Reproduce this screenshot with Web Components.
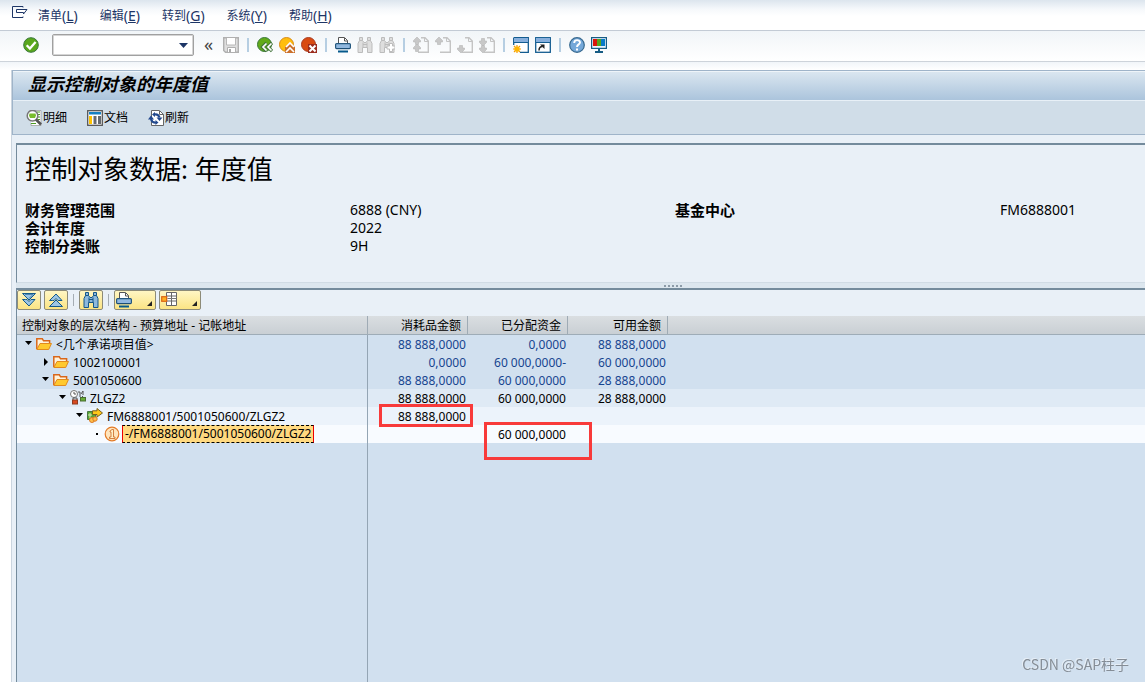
<!DOCTYPE html>
<html lang="zh-CN">
<head>
<meta charset="utf-8">
<meta name="viewport" content="width=device-width">
<title>显示控制对象的年度值</title>
<style>
html{height:100%}
body{margin:0;min-height:100%;display:flex;flex-direction:column;background:#fff;overflow-x:hidden;
font:12px/18px "Noto Sans","Noto Sans CJK SC",sans-serif;color:#000}
</style>
</head>
<body>
<sap-menu-bar></sap-menu-bar>
<sap-toolbar></sap-toolbar>
<sap-screen>
  <sap-title-bar slot="title" text="显示控制对象的年度值">
    <sap-action icon="detail">明细</sap-action>
    <sap-action icon="document">文档</sap-action>
    <sap-action icon="refresh">刷新</sap-action>
  </sap-title-bar>
  <sap-summary heading="控制对象数据: 年度值"></sap-summary>
  <sap-splitter></sap-splitter>
  <sap-tree-table></sap-tree-table>
</sap-screen>
<sap-watermark>CSDN @SAP柱子</sap-watermark>

<script>
const binoc = (f,s) => `<path d="M2.500.500h3v3L7 5.500h2l1.500-2v-3h3v3l1.500 3v9h-4.500V10.500h-5v5H1v-9l1.500-3z" fill="${f}" stroke="${s}"/><path d="M2.500 3.500h3M10.500 3.500h3M6 5.500v5M10 5.500v5M6 7.500h4" stroke="${s}" fill="none"/>`;
const page = a => `<path d="M8 .700h4l3.300 3.300v11.300H5" fill="none" stroke="#c4c4c4" stroke-width="1.400"/><path d="M11.500 1v3.500h4" fill="none" stroke="#c4c4c4"/>${a}`;
const up = y => `<path d="M4 ${y}l3.500 3.500v1.500H5.500v2.500h-3V${y+5}H.500V${y+3.5}z" fill="#c8c8c8" stroke="#b5b5b5" stroke-width=".600"/>`;
const down = y => `<path d="M4 ${y}l3.500-3.500v-1.500H5.500v-2.500h-3V${y-5}H.500V${y-3.5}z" fill="#c8c8c8" stroke="#b5b5b5" stroke-width=".600"/>`;
const disc = (f,s,m) => `<circle cx="7.500" cy="7.500" r="7" fill="${f}" stroke="${s}"/>${m}`;
const ICONS = {
 system:`<path d="M11 2.500V1.500H.500v11h10.500v-1" fill="none" stroke="#1d3566"/><path d="M4.500 4.500H15L11.500 9V7.500h-7z" fill="#fff" stroke="#1d3566"/>`,
 check:`<circle cx="8" cy="8" r="7.300" fill="#5aa71d" stroke="#39783a"/><path d="M3.700 8.200l3.200 3.300 5.700-6.500" fill="none" stroke="#fff" stroke-width="2.300"/>`,
 save:`<path d="M.700.700h14.600v14.600H2.500L.700 13.500z" fill="#dedede" stroke="#b0b0b0" stroke-width="1.400"/><path d="M3.500 1v7h9V1" fill="#fff" stroke="#b8b8b8"/><path d="M4.500 15v-4.500h8V15" fill="#fff" stroke="#b0b0b0"/><path d="M6 12h2v3H6z" fill="#aaa"/>`,
 back:disc('#62aa19','#39783a','<path d="M9.500 6l-4 4 4 4M15 6l-4 4 4 4" fill="none" stroke="#42733a" stroke-width="3.200"/><path d="M9.500 6.500L6 10l3.500 3.500M14.500 6.500L11 10l3.500 3.500" fill="none" stroke="#fff" stroke-width="1.700"/>'),
 exit:disc('#ffbd0c','#d78b18','<path d="M6 10l5-5 5 5v6H6z" fill="#cb702b"/><path d="M7 10l4-4 4 4M7 15l4-4 4 4" fill="none" stroke="#fff" stroke-width="1.700"/>'),
 cancel:disc('#d94b12','#a93c21','<path d="M7 7h9v9H7z" fill="#9b2c1d"/><path d="M8.500 8.500l6 6M14.500 8.500l-6 6" stroke="#fff" stroke-width="2"/>'),
 print:`<path d="M3.500 8V.500h6l3 3V8" fill="#fff" stroke="#555"/><path d="M9.500 1v3h3" fill="none" stroke="#555"/><rect x=".600" y="6.600" width="14.800" height="5" rx="1" fill="#91b8df" stroke="#24577e" stroke-width="1.200"/><path d="M1 11.500h14" stroke="#1c4e75"/><path d="M3 14.500h10" stroke="#075a8c" stroke-width="2"/>`,
 find:binoc('#dedede','#bcbcbc'),
 findNext:binoc('#dedede','#bcbcbc')+'<path d="M10.500 6.500v2.500h-2.500v3h2.500v2.500h3V12H16V9h-2.500V6.500z" fill="#fff" stroke="#bcbcbc"/>',
 pageFirst:page(up(0)+up(7)),pageUp:page(up(0)),pageDown:page(down(16)),pageLast:page(down(9)+down(16)),
 session:`<path d="M.700.700h14.600v14.600H7M.700 8V.700" fill="#fff" stroke="#135c90" stroke-width="1.300"/><path d="M1 1h14v4H1z" fill="#87afdc"/><path d="M1 5.500h14" stroke="#135c90"/><path d="M4 8v8M0 12h8M1 9l6 6M7 9l-6 6" stroke="#f59c00" stroke-width="1.200"/><circle cx="4" cy="12" r="2.600" fill="#ffb600"/>`,
 shortcut:`<rect x=".700" y=".700" width="14.600" height="14.600" fill="#fff" stroke="#135c90" stroke-width="1.300"/><path d="M1 1h14v4H1z" fill="#87afdc"/><path d="M1 5.500h14" stroke="#135c90"/><path d="M4 13.500c0-3 1-4 3.500-4" fill="none" stroke="#222" stroke-width="1.500"/><path d="M5 7.500h4.500v4.500z" fill="#222"/>`,
 help:`<circle cx="8" cy="8" r="7.300" fill="#75a8d9" stroke="#37698f" stroke-width="1.200"/><path d="M5.200 6c0-4 5.800-3.500 5.800-.500C11 7.500 8 7.300 8 10" fill="none" stroke="#fff" stroke-width="1.900"/><path d="M7 11.500h2v2H7z" fill="#fff"/>`,
 monitor:`<rect x=".600" y=".600" width="14.800" height="10.800" fill="#e8f4ff" stroke="#165c84" stroke-width="1.200"/><path d="M2 2h4v7H2z" fill="#d9150b"/><path d="M6 2h4v7H6z" fill="#55a51c"/><path d="M10 2h4v7h-4z" fill="#087ac8"/><path d="M8 12v3M4 15h8" stroke="#165c84" stroke-width="2"/>`,
 detail:`<path d="M7 .500h8v15H5V13" fill="#fff" stroke="#888" stroke-width=".600"/><path d="M11 2h3M12 4.500h2M12 7h2M12 9.500h2M5 13.500h5" stroke="#4d9c22" stroke-width="1.200"/><circle cx="6.500" cy="5.700" r="5.300" fill="#fff" stroke="#777" stroke-width="1.500"/><path d="M3.500 3.500h6l.500 2-1 2.500H4L3 5.500z" fill="#79bd2c"/><path d="M10 9.500l5 5" stroke="#555" stroke-width="2.600"/>`,
 document:`<rect x=".700" y=".700" width="14.600" height="14.600" fill="#fff" stroke="#555" stroke-width="1.300"/><path d="M2 2h12v2.500H2z" fill="#1680c2"/><path d="M2 6h3v8H2z" fill="#ffc400"/><path d="M6.500 6h3v8h-3zM11 6h3v8h-3z" fill="#666b70"/>`,
 refresh:`<path d="M3.500.500h8L15.500 4.500v11h-12z" fill="#fff" stroke="#666"/><path d="M11.500 1v3.500h4" fill="none" stroke="#666"/><path d="M6.500 4.500A4.500 4.500 0 0 1 11.500 7.500M8 12.500A4.500 4.500 0 0 1 3 9" fill="none" stroke="#23498d" stroke-width="2.200"/><path d="M8.500 7.500h6l-3 3.500zM0 9.500h6L3 5.500zM7 2v5L4 4.500zM7.500 10v5l3-2.500z" fill="#23498d"/>`,
 expandAll:`<path d="M1.500 1.500h13L8 8z" fill="#9cc5e5" stroke="#135a8b"/><path d="M4.500 7.500h1.500l2 2 2-2h4L8 14 1.500 7.500z" fill="#9cc5e5" stroke="#135a8b"/><path d="M4 2.500h8L8 6.500" fill="none" stroke="#4f88b3"/>`,
 collapseAll:`<path d="M1.500 14.500h13L8 8z" fill="#9cc5e5" stroke="#135a8b"/><path d="M4.500 8.500h1.500l2-2 2 2h4L8 2 1.500 8.500z" fill="#9cc5e5" stroke="#135a8b"/>`,
 search:binoc('#8db9dd','#145789'),
 layout:`<path d="M5.500.500h10v13h-10zM10.500.500v13M5.500 4h10M5.500 9h10" fill="#fff" stroke="#666"/><rect x=".700" y="4.700" width="5" height="4.600" fill="#ffb01e" stroke="#db6413" stroke-width="1.200"/><path d="M6.500 6.500h9" stroke="#777"/>`,
 folder:`<path d="M.800 13V2.800h5.500l1.300 2h6V7" fill="#fff2da" stroke="#d9671a" stroke-width="1.500"/><path d="M.800 13.500L4 7.500h11.500L12.700 13.500z" fill="#ffc92e" stroke="#e18a1e"/>`,
 budget:`<circle cx="4" cy="4" r="3.500" fill="#fff" stroke="#777"/><path d="M4 2v2h2M8 2h2v5M11 4l2-3v4M12 6l3 3" fill="none" stroke="#555"/><path d="M3 10V8h4v2" fill="none" stroke="#555"/><rect x="2.500" y="10" width="5" height="4" fill="#d94a21" stroke="#8e3a20"/><rect x="10.500" y="7.500" width="5" height="3.500" fill="#65ad35" stroke="#4b6d32"/>`,
 fund:`<path d="M.500 3.500h8v8h-8z" fill="#57a634" stroke="#477443"/><path d="M1 7h4M3 5v5" stroke="#d7e9b7"/><circle cx="5" cy="12" r="2.500" fill="#ffc04a" stroke="#dc7923"/><circle cx="8" cy="11" r="2.200" fill="#ffc04a" stroke="#dc7923"/><path d="M5.500 2.800H10V.500L15.500 5 10 9V6.500H5.500z" fill="#ffc719" stroke="#79601d"/>`,
 info:`<circle cx="8" cy="8" r="6.800" fill="#ffe5bd" stroke="#e37b28" stroke-width="1.200"/><path d="M6 5l2-1.500h1.500V11H11v1.500H5.500V11H7V6H6z" fill="#fff1c8" stroke="#c96722" stroke-width=".800"/>`
};
const define = (name, render) => customElements.define(name, class extends HTMLElement {
  connectedCallback(){
    if(this.shadowRoot) return;
    this.attachShadow({mode:'open'}).innerHTML = render(this);
  }
});
const reset = 'button{font:inherit;color:inherit;border:0;background:none;padding:0;margin:0;display:flex;align-items:center}';

define('sap-icon', e => `<style>:host{display:block;width:16px;height:16px;flex:none}svg{display:block}</style>
<svg width="16" height="16" viewBox="0 0 16 16" aria-hidden="true">${ICONS[e.getAttribute('name')]}</svg>`);

define('sap-menu-bar', () => `<style>
:host{display:block;color:#1d3566;background:linear-gradient(#dce5ee,#f5f8fb 9px,#fff 16px);border-bottom:1px solid #c3cbd5}
nav{display:flex;align-items:center;gap:22px;height:30px;padding:0 12px}
${reset}button span{font-size:14px}button{line-height:20px;padding-top:2px;white-space:nowrap}
.sys{padding:0;margin-right:-12px}.sys sap-icon{margin-bottom:4px}
</style><nav aria-label="菜单"><button class="sys" aria-label="系统菜单"><sap-icon name="system"></sap-icon></button>
${[['清单','L'],['编辑','E'],['转到','G'],['系统','Y'],['帮助','H']].map(([t,k])=>`<button accesskey="${k}">${t}<span>(<u>${k}</u>)</span></button>`).join('')}</nav>`);

const tool = (n,l) => `<button aria-label="${l}" title="${l}"><sap-icon name="${n}"></sap-icon></button>`;
define('sap-toolbar', () => `<style>
:host{display:block;background:linear-gradient(#f1f5f8,#fff);border-bottom:1px solid #cdd3da}
div.bar{display:flex;align-items:center;gap:6px;height:28px;padding:0 23px 2px}
${reset}
.combo{display:flex;box-sizing:border-box;width:142px;height:22px;margin-left:7px;border:1px solid #a0a0a0;box-shadow:inset 0 0 0 1px #d5d5d5;border-radius:2px;background:#fff;padding:2px}
input{flex:1;min-width:0;border:0;outline:0;background:none;padding:0 4px;font:inherit}
.drop{width:16px;justify-content:center}
.sep{width:2px;height:14px;margin:0 2px;background:#b6cee2}
.less{width:17px;justify-content:center;font-size:18px;line-height:18px;color:#444;padding-bottom:2px}
</style><div class="bar" role="toolbar">${tool('check','回车')}
<div class="combo"><input aria-label="命令"><button class="drop" aria-label="打开"><svg width="9" height="5"><path d="M0 0h9L4.500 5z" fill="#1d3566"/></svg></button></div>
<button class="less">«</button>${tool('save','保存')}<i class="sep"></i>${tool('back','返回')}${tool('exit','退出')}${tool('cancel','取消')}<i class="sep"></i>
${tool('print','打印')}${tool('find','查找')}${tool('findNext','查找下一个')}<i class="sep"></i>${tool('pageFirst','首页')}${tool('pageUp','上一页')}${tool('pageDown','下一页')}${tool('pageLast','末页')}<i class="sep"></i>
${tool('session','新建会话')}${tool('shortcut','创建快捷方式')}<i class="sep"></i>${tool('help','帮助')}${tool('monitor','自定义布局')}</div>`);

define('sap-screen', () => `<style>
:host{flex:1;display:flex;flex-direction:column;padding:8px 0 0 12px;background:linear-gradient(#f1f5f9,#fff 8px)}
main{flex:1;display:flex;flex-direction:column;background:#e9f0f7;box-shadow:-1px 0 #cbd5df}
section{flex:1;display:flex;flex-direction:column;margin:8px 0 0 4px}
</style><main><slot name="title"></slot><section><slot></slot></section></main>`);

define('sap-title-bar', e => `<style>
:host{display:block;border:1px solid #9fb4c9;border-right:0;box-sizing:border-box}
h1{margin:0;padding:0 15px;height:30px;box-sizing:border-box;border-top:1px solid #eef4f9;border-bottom:1px solid #e8f0f7;font-size:18px;line-height:24px;font-style:italic;font-weight:700;white-space:nowrap;background:linear-gradient(#dae6f0,#abc4dc)}
div{display:flex;gap:20px;height:33px;padding:0 13px;align-items:center;background:#d0dde8}
</style><h1>${e.getAttribute('text')}</h1><div role="toolbar"><slot></slot></div>`);

define('sap-action', e => `<style>:host{display:block}${reset}button{white-space:nowrap}
sap-icon{margin-right:1px}</style><button><sap-icon name="${e.getAttribute('icon')}"></sap-icon><slot></slot></button>`);

define('sap-summary', e => `<style>
:host{display:block;box-sizing:border-box;min-height:140px;padding:6px 8px;background:#e9f0f7;border-top:2px solid #748b9c;border-left:1px solid #748b9c;border-bottom:1px solid #d0dbe4}
h2{margin:0 0 14px;font-size:26px;line-height:36px;font-weight:400}
dl{display:grid;grid-template-columns:325px 325px 325px 1fr;grid-auto-rows:18px;margin:0;font-size:14px;line-height:18px;white-space:nowrap}
dt{font-size:15px;font-weight:700;grid-column:1}dd{margin:0}.right{grid-column:3}
</style><h2>${e.getAttribute('heading')}</h2>
<dl><dt>财务管理范围</dt><dd>6888 (CNY)</dd><dt class="right">基金中心</dt><dd>FM6888001</dd><dt>会计年度</dt><dd>2022</dd><dt>控制分类账</dt><dd>9H</dd></dl>`);

define('sap-splitter', () => `<style>
:host{display:flex;justify-content:flex-start;gap:2px;height:5px;align-items:center;background:#dce6ee;padding-left:57.4%}
i{width:2px;height:2px;background:#8c9ba8}
</style><i></i><i></i><i></i><i></i><i></i>`);

const ROWS = [
 [0,'open','folder','&lt;几个承诺项目值&gt;','88 888,0000','0,0000','88 888,0000','sum'],
 [1,'shut','folder','1002100001','0,0000','60 000,0000-','60 000,0000','sum'],
 [1,'open','folder','5001050600','88 888,0000','60 000,0000','28 888,0000','sum'],
 [2,'open','budget','ZLGZ2','88 888,0000','60 000,0000','28 888,0000','l2'],
 [3,'open','fund','FM6888001/5001050600/ZLGZ2','88 888,0000','','','l3'],
 [4,'leaf','info','-/FM6888001/5001050600/ZLGZ2','','60 000,0000','','l4']
];
const MARK = {open:'<path d="M0 1h7L3.500 5z"/>',shut:'<path d="M2 0l4 4-4 4z"/>',leaf:'<path d="M3 3h2v2H3z"/>'};
define('sap-tree-table', () => `<style>
:host{flex:1;display:flex;flex-direction:column;border-top:2px solid #748b9c;border-left:1px solid #748b9c;background:#d1e0ef}
${reset}
.bar{display:flex;align-items:flex-start;gap:3px;height:26px;background:#e9f0f7}
.bar button{box-sizing:border-box;width:24px;height:20px;padding:0 3px;border:1px solid #8d8b78;border-radius:2px;background:linear-gradient(#fff6c4,#fbe484)}
.bar .menu{width:42px;padding:0;padding-left:1px;justify-content:space-between;align-items:flex-end}
.menu sap-icon{margin-bottom:1px}.menu svg{margin:0 3px 3px 0}
.sep{width:1px;height:12px;margin:4px 2px;background:#a5adb4}
.grid{flex:1;display:flex}
table{flex:1;width:100%;table-layout:fixed;border-collapse:separate;border-spacing:0}
col.tree{width:351px}col.num{width:100px}
th{box-sizing:border-box;height:19px;padding:2px 6px 0 5px;line-height:16px;font-weight:400;text-align:right;white-space:nowrap;background:linear-gradient(#dadee1,#c9cfd4);border-bottom:1px solid #9eacb7;border-right:1px solid #9fabb5}
th:first-child{text-align:left}th:last-child{border-right:0}
td{height:18px;padding:2px 2px 0 0;line-height:16px;text-align:right;white-space:nowrap;position:relative;box-sizing:border-box}
tr>td:first-child{padding:0;border-right:1px solid #94a5b4}
.node{display:flex;align-items:center;height:18px;padding-left:calc(8px + 17px * var(--level))}
.node svg{width:8px;height:8px;margin-right:3px}.node span{margin-left:4px;padding-top:2px}
.sum td:nth-child(n+2){color:#17458f}
.l2 td{background:#dfeaf5}.l3 td{background:#ecf3fb}.l4 td{background:#f8fbff}
.l4 .node span{box-sizing:border-box;height:18px;margin-left:2px;padding:0 2px;background:#ffd980;border:1px dashed #000;border-left:1px solid #e00;border-right:1px solid #e00}
.fill td{height:auto}
mark{position:absolute;z-index:1;box-sizing:border-box;border:3px solid #f83a3a;background:none;pointer-events:none}
.l3 mark{left:11px;top:-3px;width:94px;height:23px}
.l4 mark{left:16px;top:-3px;width:108px;height:38px}
</style>
<div class="bar" role="toolbar"><button aria-label="展开"><sap-icon name="expandAll"></sap-icon></button><button aria-label="折叠"><sap-icon name="collapseAll"></sap-icon></button><i class="sep"></i>
<button aria-label="查找"><sap-icon name="search"></sap-icon></button><i class="sep"></i>
${['print','layout'].map(n=>`<button class="menu" aria-label="${n=='print'?'打印':'布局'}"><sap-icon name="${n}"></sap-icon><svg width="5" height="5"><path d="M5 0v5H0z" fill="#222"/></svg></button>`).join('')}</div>
<div class="grid"><table><colgroup><col class="tree"><col class="num"><col class="num"><col class="num"><col></colgroup>
<thead><tr><th scope="col">控制对象的层次结构 - 预算地址 - 记帐地址</th><th scope="col">消耗品金额</th><th scope="col">已分配资金</th><th scope="col">可用金额</th><th></th></tr></thead>
<tbody>${ROWS.map(([lv,m,ic,t,a,b,c,k])=>`<tr class="${k}"><td><div class="node" style="--level:${lv}"><svg viewBox="0 0 8 8">${MARK[m]}</svg><sap-icon name="${ic}"></sap-icon><span>${t}</span></div></td><td>${a}${k=='l3'?'<mark></mark>':''}</td><td>${b}${k=='l4'?'<mark></mark>':''}</td><td>${c}</td><td></td></tr>`).join('')}
<tr class="fill"><td></td><td></td><td></td><td></td><td></td></tr></tbody></table></div>`);

define('sap-watermark', () => `<style>:host{position:fixed;right:16px;bottom:8px;font:14px/20px "Noto Sans CJK SC",sans-serif;color:#858d96;text-shadow:-1px -1px #e6eef6}</style><slot></slot>`);
</script>
</body>
</html>
